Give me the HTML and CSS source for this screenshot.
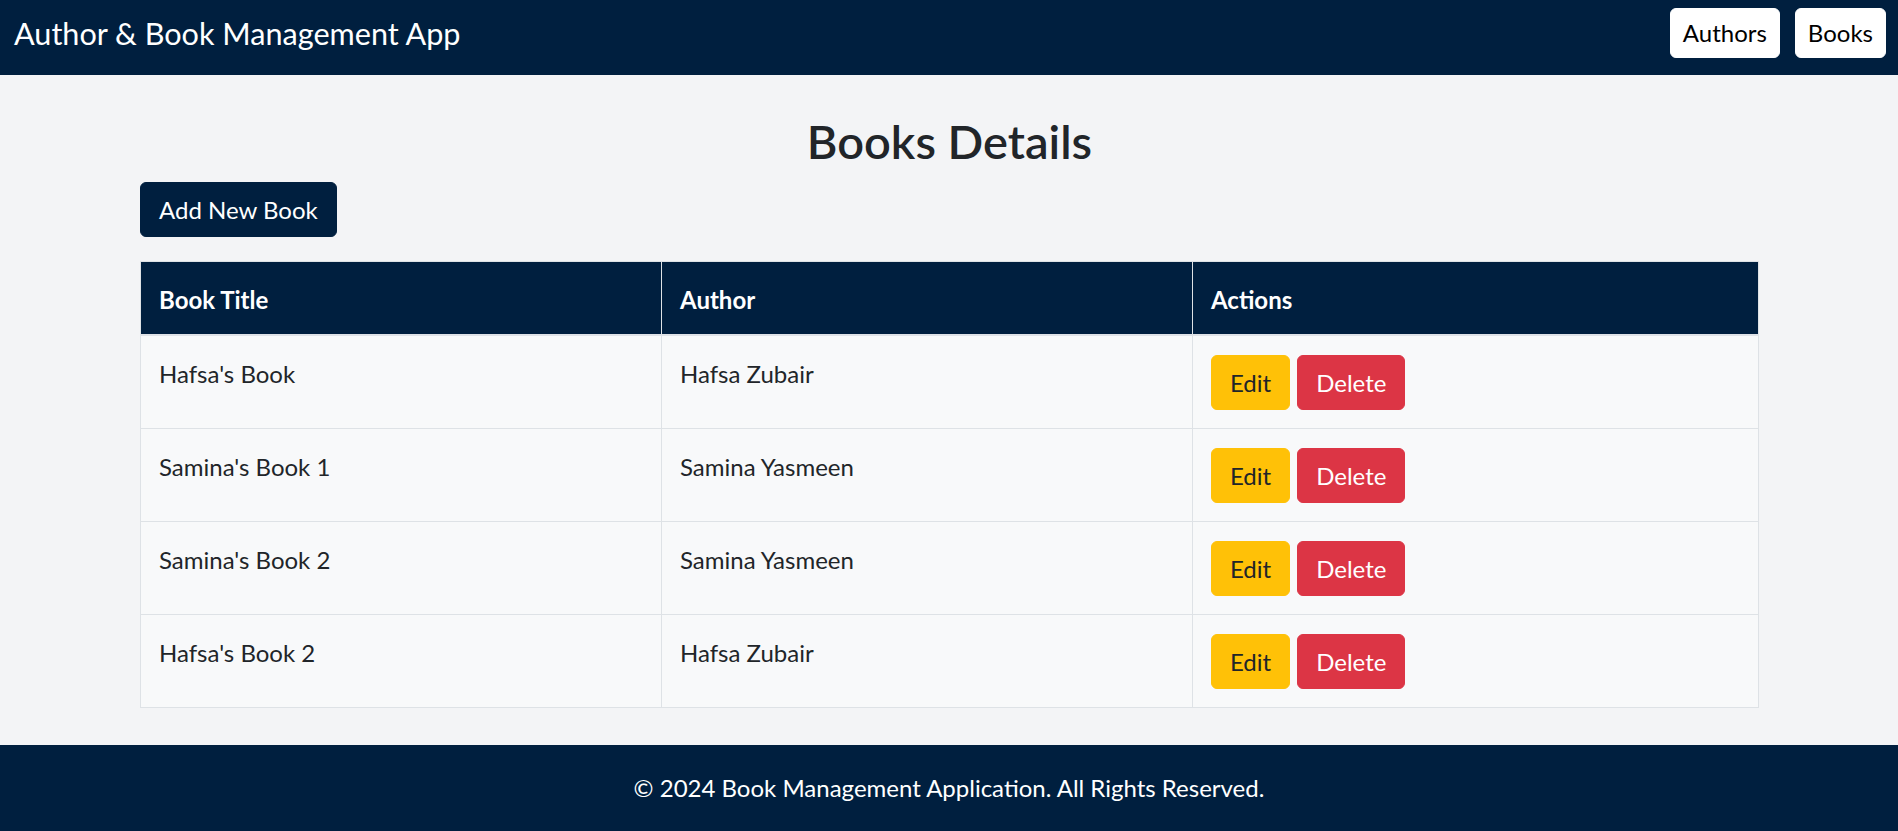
FILE: index.html
```html
<!DOCTYPE html>
<html lang="en">
<head>
<meta charset="utf-8">
<title>Author &amp; Book Management App</title>
<link rel="stylesheet" href="styles.css">
</head>
<body>
<header class="navbar">
  <a class="brand" href="#">Author &amp; Book Management App</a>
  <nav class="nav">
    <a class="nav-btn" href="#">Authors</a>
    <a class="nav-btn" href="#">Books</a>
  </nav>
</header>
<main class="main">
  <h1 class="page-title">Books Details</h1>
  <button class="btn btn-primary">Add New Book</button>
  <table class="books">
    <colgroup>
      <col class="c1">
      <col class="c2">
      <col class="c3">
    </colgroup>
    <thead>
      <tr><th>Book Title</th><th>Author</th><th>Actions</th></tr>
    </thead>
    <tbody>
      <tr>
        <td>Hafsa's Book</td><td>Hafsa Zubair</td>
        <td class="act-cell"><div class="actions"><button class="btn btn-edit">Edit</button><button class="btn btn-delete">Delete</button></div></td>
      </tr>
      <tr>
        <td>Samina's Book 1</td><td>Samina Yasmeen</td>
        <td class="act-cell"><div class="actions"><button class="btn btn-edit">Edit</button><button class="btn btn-delete">Delete</button></div></td>
      </tr>
      <tr>
        <td>Samina's Book 2</td><td>Samina Yasmeen</td>
        <td class="act-cell"><div class="actions"><button class="btn btn-edit">Edit</button><button class="btn btn-delete">Delete</button></div></td>
      </tr>
      <tr>
        <td>Hafsa's Book 2</td><td>Hafsa Zubair</td>
        <td class="act-cell"><div class="actions"><button class="btn btn-edit">Edit</button><button class="btn btn-delete">Delete</button></div></td>
      </tr>
    </tbody>
  </table>
</main>
<footer class="footer">© 2024 Book Management Application. All Rights Reserved.</footer>
</body>
</html>
```
FILE: styles.css
```css
* { box-sizing: border-box; }
html, body { margin: 0; padding: 0; }
body {
  font-family: Lato, "Open Sans", sans-serif;
  font-size: 24px;
  line-height: 1.5;
  color: #212529;
  background: #f3f4f6;
}
.navbar {
  height: 75px;
  background: #001f3f;
  display: flex;
  justify-content: space-between;
  align-items: flex-start;
  padding: 8px 12px 0 14px;
}
.brand {
  color: #fff;
  text-decoration: none;
  font-size: 30.6px;
  line-height: 45px;
  padding-top: 3px;
}
.nav { display: flex; gap: 15px; }
.nav-btn {
  display: block;
  background: #fff;
  color: #000;
  text-decoration: none;
  border-radius: 6px;
  padding: 6px 12px;
  border: 1px solid #fff;
  line-height: 36px;
  font-size: 24px;
}
.main {
  padding: 39px 139px 37px 140px;
}
.page-title {
  margin: 0 0 14px;
  text-align: center;
  font-size: 47px;
  line-height: 54px;
  font-weight: 600;
  color: #212529;
}
.btn {
  font-family: inherit;
  font-size: 24px;
  line-height: 35px;
  padding: 9px 18px;
  border: 1px solid transparent;
  border-radius: 6px;
  cursor: pointer;
}
.btn-primary {
  background: #001f3f;
  color: #fff;
  border-color: #001f3f;
  margin-bottom: 24px;
  display: block;
}
.books {
  width: 100%;
  border-collapse: collapse;
  table-layout: fixed;
  border: 1px solid #dee2e6;
}
.c1 { width: 521px; }
.c2 { width: 531px; }
.books th {
  background: #001f3f;
  color: #fff;
  text-align: left;
  font-weight: 700;
  padding: 20px 18px 16px;
  line-height: 36px;
  border: 1px solid #dee2e6;
  border-bottom: 2px solid #dfe2e7;
}
.books td {
  background: #f8f9fa;
  vertical-align: top;
  padding: 20px 18px 0;
  line-height: 36px;
  border: 1px solid #dee2e6;
}
.books td.act-cell {
  padding: 19px 18px 18px;
}
.actions { display: flex; gap: 7px; }
.btn-edit { background: #ffc107; border-color: #ffc107; color: #212529; }
.btn-delete { background: #dc3545; border-color: #dc3545; color: #fff; }
.footer {
  background: #001f3f;
  color: #fff;
  text-align: center;
  padding: 25px 0;
  line-height: 36px;
}
```
